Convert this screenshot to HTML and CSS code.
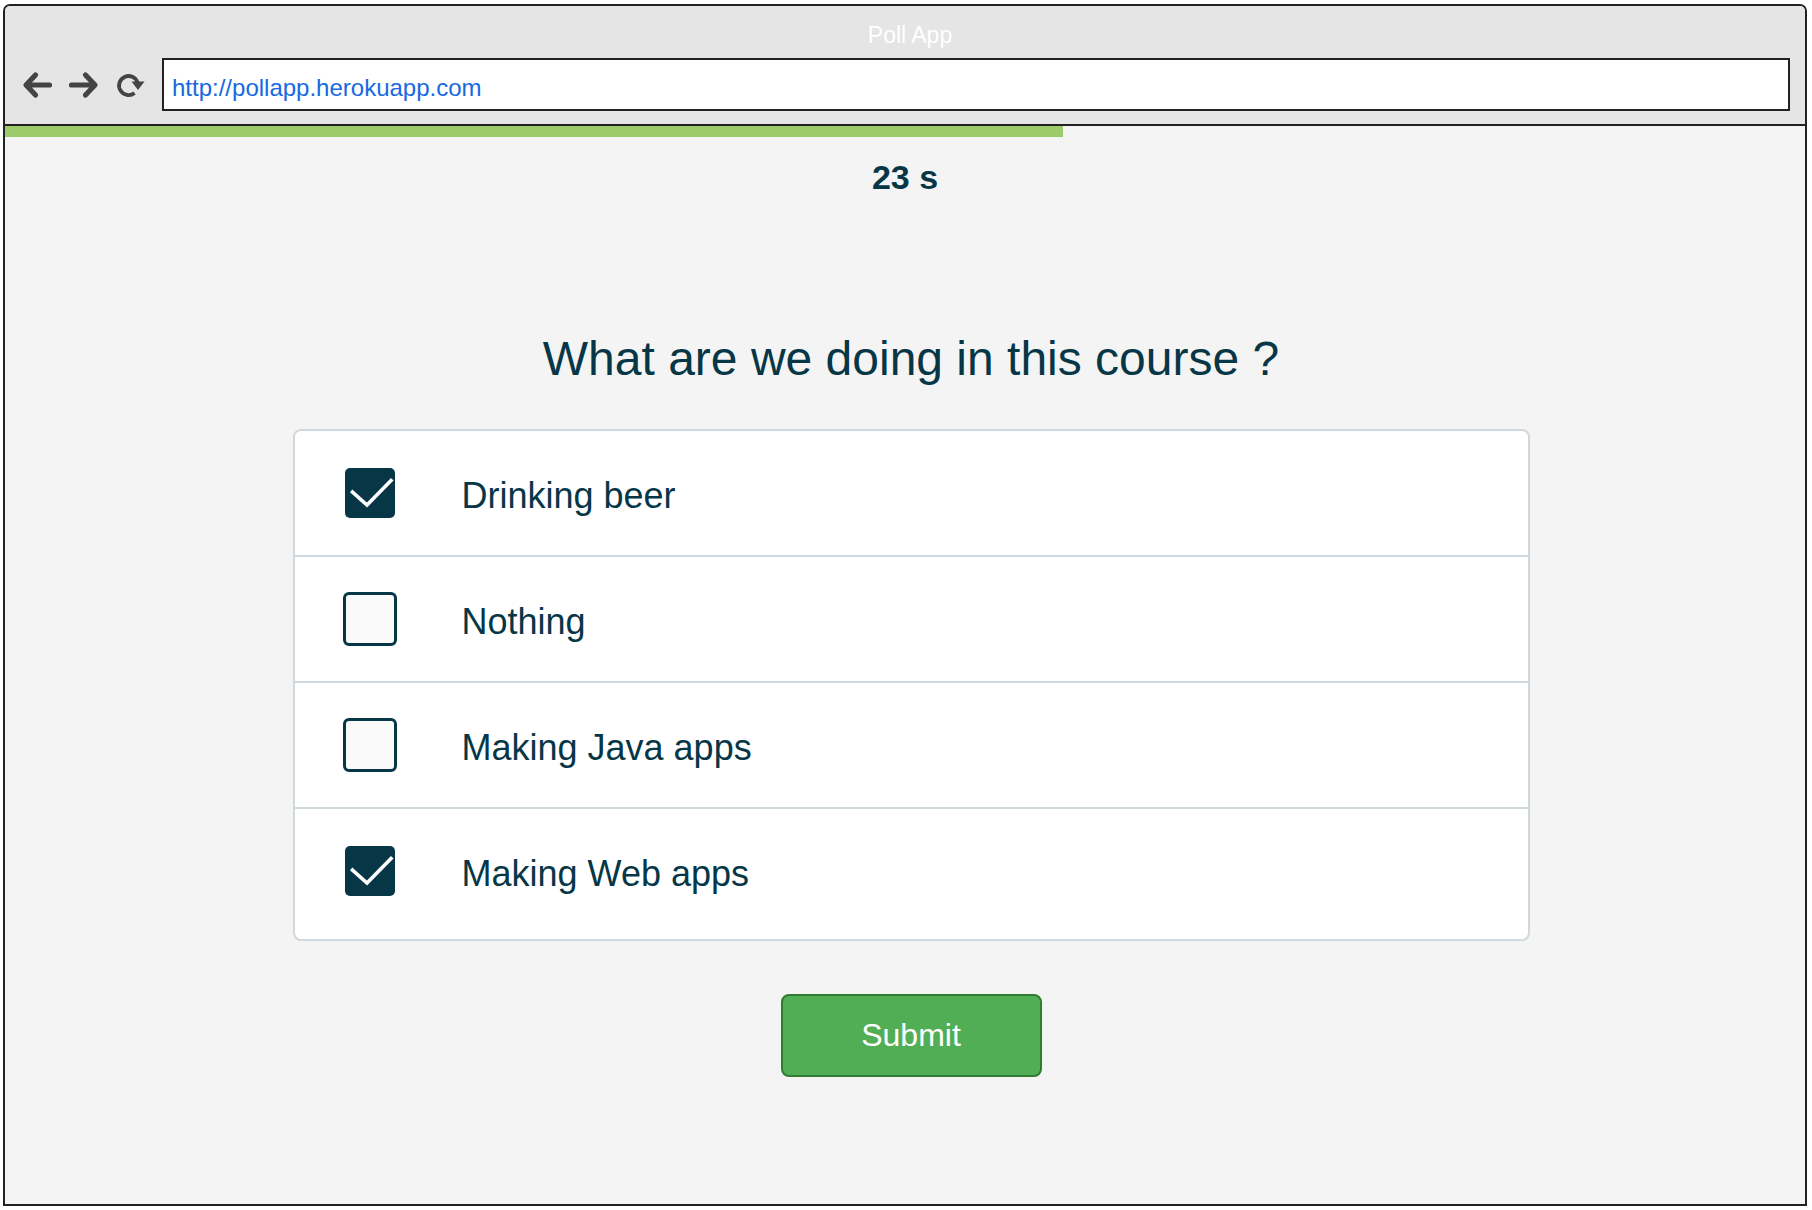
FILE: index.html
```html
<!DOCTYPE html>
<html lang="en">
<head>
<meta charset="utf-8">
<title>Poll App</title>
<link rel="stylesheet" href="styles.css">
</head>
<body>
<div class="window">
  <header class="chrome">
    <div class="chrome-title">Poll App</div>
    <div class="nav">
      <svg class="nav-icon nav-back" viewBox="0 0 32 28" width="32" height="28" aria-hidden="true">
        <path d="M28.5 14 H5.5 M14.5 4 L5 14 L14.5 24" fill="none" stroke="#444" stroke-width="5.2" stroke-linecap="round" stroke-linejoin="round"/>
      </svg>
      <svg class="nav-icon nav-forward" viewBox="0 0 32 28" width="32" height="28" aria-hidden="true">
        <path d="M3.5 14 H26.5 M17.5 4 L27 14 L17.5 24" fill="none" stroke="#444" stroke-width="5.2" stroke-linecap="round" stroke-linejoin="round"/>
      </svg>
      <svg class="nav-icon nav-reload" viewBox="0 0 32 28" width="32" height="28" aria-hidden="true">
        <path d="M18.5 22 A9.5 9.5 0 1 1 21.6 11.6" fill="none" stroke="#444" stroke-width="3.8" stroke-linecap="butt"/>
        <polygon points="15.5,10.5 28.5,10.5 22,19" fill="#444"/>
      </svg>
      <div class="url">http://pollapp.herokuapp.com</div>
    </div>
  </header>
  <div class="progress"><div class="progress-fill" style="width:58.8%"></div></div>
  <main class="content">
    <div class="timer">23 s</div>
    <h1 class="question">What are we doing in this course ?</h1>
    <ul class="options">
      <li class="option">
        <span class="box box-checked">
          <svg viewBox="0 0 50 50" width="50" height="50" aria-hidden="true"><polyline points="7.5,24 22,37 46,12.5" fill="none" stroke="#fff" stroke-width="3.6" stroke-linecap="square"/></svg>
        </span>
        <span class="option-label">Drinking beer</span>
      </li>
      <li class="option">
        <span class="box box-empty"></span>
        <span class="option-label">Nothing</span>
      </li>
      <li class="option">
        <span class="box box-empty"></span>
        <span class="option-label">Making Java apps</span>
      </li>
      <li class="option">
        <span class="box box-checked">
          <svg viewBox="0 0 50 50" width="50" height="50" aria-hidden="true"><polyline points="7.5,24 22,37 46,12.5" fill="none" stroke="#fff" stroke-width="3.6" stroke-linecap="square"/></svg>
        </span>
        <span class="option-label">Making Web apps</span>
      </li>
    </ul>
    <button class="submit" type="button">Submit</button>
  </main>
</div>
</body>
</html>
```

FILE: styles.css
```css
* {
  box-sizing: border-box;
}

html, body {
  margin: 0;
  padding: 0;
  background: #ffffff;
}

body {
  font-family: "Liberation Sans", Arial, Helvetica, sans-serif;
  color: #073747;
}

.window {
  margin: 4px 5px 4px 3px;
  height: 1202px;
  border: 2px solid #222222;
  border-radius: 7px 7px 0 0;
  display: flex;
  flex-direction: column;
  overflow: hidden;
  background: #f4f4f4;
}

.chrome {
  height: 120px;
  background: #e5e5e5;
  border-bottom: 2px solid #222222;
  display: flex;
  flex-direction: column;
  flex: none;
}

.chrome-title {
  padding-top: 9px;
  padding-left: 10px;
  height: 52px;
  line-height: 40px;
  font-size: 23px;
  color: #ffffff;
  text-align: center;
}

.nav {
  display: flex;
  align-items: center;
  height: 53px;
  padding-left: 16px;
  padding-right: 15px;
}

.nav-icon {
  flex: none;
  display: block;
}

.nav-back {
  margin-right: 15px;
}

.nav-forward {
  margin-right: 16px;
}

.nav-reload {
  margin-right: 14px;
}

.url {
  flex: 1;
  height: 53px;
  border: 2px solid #222222;
  background: #ffffff;
  display: flex;
  align-items: center;
  padding-left: 8px;
  padding-top: 7px;
  font-size: 24px;
  color: #1769e0;
}

.progress {
  height: 11px;
  flex: none;
  background: #f4f4f4;
}

.progress-fill {
  height: 100%;
  background: #9dcb6b;
}

.content {
  flex: 1;
  display: flex;
  flex-direction: column;
  align-items: center;
  padding-top: 20px;
  padding-left: 12px;
}

.timer {
  font-size: 34px;
  font-weight: bold;
  line-height: 41px;
  margin-right: 12px;
}

.question {
  margin: 133px 0 0;
  font-size: 48px;
  font-weight: normal;
  line-height: 56px;
}

.options {
  list-style: none;
  margin: 42px 0 0;
  padding: 0 0 6px;
  width: 1237px;
  background: #ffffff;
  border: 2px solid #cfd8dc;
  border-radius: 8px;
}

.option {
  height: 124px;
  display: flex;
  align-items: center;
  padding-left: 50px;
}

.option + .option {
  border-top: 2px solid #cfd8dc;
  height: 126px;
}

.box {
  flex: none;
  width: 50px;
  height: 50px;
  margin-right: 67px;
  border-radius: 5px;
  display: block;
}

.box svg {
  display: block;
}

.box-checked {
  background: #073747;
}

.box-empty {
  width: 54px;
  height: 54px;
  margin-left: -2px;
  margin-right: 65px;
  background: #fafafa;
  border: 3.5px solid #073747;
  border-radius: 6px;
}

.option-label {
  font-size: 36px;
  line-height: 43px;
  padding-top: 5px;
}

.submit {
  margin-top: 53px;
  width: 261px;
  height: 83px;
  background: #51ae55;
  border: 2px solid #2f7d32;
  border-radius: 8px;
  color: #ffffff;
  font-family: "Liberation Sans", Arial, Helvetica, sans-serif;
  font-size: 32px;
  padding: 0;
  cursor: pointer;
}
```
